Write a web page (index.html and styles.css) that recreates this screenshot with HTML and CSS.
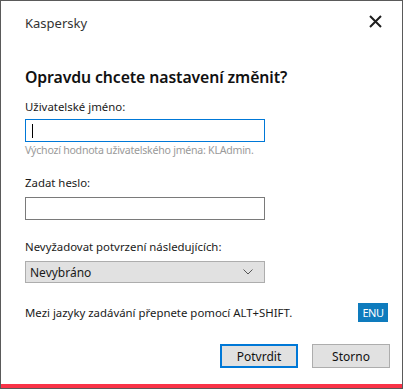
FILE: index.html
```html
<!DOCTYPE html>
<html lang="cs">
<head>
    <meta charset="UTF-8">
    <meta name="viewport" content="width=device-width, initial-scale=1.0">
    <title>Kaspersky</title>
    <link rel="stylesheet" href="styles.css">
</head>
<body>
    <div class="window">
        <div class="titlebar">
            <span class="title">Kaspersky</span>
            <span class="close">
                <svg width="13" height="13" viewBox="0 0 13 13">
                    <path d="M1 1 L12 12 M12 1 L1 12" stroke="#1e1e1e" stroke-width="2"/>
                </svg>
            </span>
        </div>
        <div class="content">
            <h2 class="heading">Opravdu chcete nastavení změnit?</h2>

            <label class="label first">Uživatelské jméno:</label>
            <div class="input focused"><span class="caret"></span></div>
            <div class="hint">Výchozí hodnota uživatelského jména: KLAdmin.</div>

            <label class="label second">Zadat heslo:</label>
            <div class="input"></div>

            <label class="label third">Nevyžadovat potvrzení následujících:</label>
            <div class="select">
                <span>Nevybráno</span>
                <svg width="10" height="6" viewBox="0 0 10 6">
                    <path d="M0.5 0.5 L5 5 L9.5 0.5" fill="none" stroke="#555" stroke-width="1"/>
                </svg>
            </div>

            <div class="lang-row">
                <span>Mezi jazyky zadávání přepnete pomocí ALT+SHIFT.</span>
                <span class="badge">ENU</span>
            </div>

            <div class="buttons">
                <button class="btn primary">Potvrdit</button>
                <button class="btn">Storno</button>
            </div>
        </div>
        <div class="accent"></div>
    </div>
</body>
</html>
```

FILE: styles.css
```css
body {
    margin: 0;
    font-family: "Noto Sans", "Liberation Sans", sans-serif;
    font-size: 11.4px;
    color: #1a1a1a;
    background: #fff;
}
.window {
    box-sizing: border-box;
    width: 403px;
    height: 389px;
    border: 1px solid #5a5a5a;
    display: flex;
    flex-direction: column;
    background: #fff;
}
.titlebar {
    display: flex;
    justify-content: space-between;
    align-items: flex-start;
    padding: 13px 20px 0 24px;
    height: 19px;
}
.title {
    font-size: 13px;
    line-height: 18px;
    color: #333;
}
.close {
    display: flex;
    margin-top: 1px;
}
.content {
    flex: 1;
    padding: 0 0 0 24px;
}
.heading {
    margin: 32px 0 0;
    font-size: 15.8px;
    line-height: 24px;
    font-weight: 600;
    letter-spacing: -0.1px;
    color: #111;
}
.label {
    display: block;
    line-height: 16px;
}
.label.first {
    margin-top: 10px;
}
.label.second {
    margin-top: 17px;
}
.label.third {
    margin-top: 19px;
}
.input {
    box-sizing: border-box;
    width: 240px;
    height: 23px;
    border: 1px solid #7a7a7a;
    margin-top: 6px;
    position: relative;
}
.input.focused {
    border-color: #0078d7;
    margin-top: 4px;
}
.caret {
    position: absolute;
    left: 6px;
    top: 4px;
    width: 1px;
    height: 14px;
    background: #000;
}
.hint {
    line-height: 16px;
    color: #9a9a9a;
    font-size: 10.6px;
    letter-spacing: -0.25px;
}
.select {
    box-sizing: border-box;
    width: 240px;
    height: 22px;
    margin-top: 6px;
    background: #e1e1e1;
    border: 1px solid #adadad;
    display: flex;
    align-items: center;
    justify-content: space-between;
    padding: 0 11px 0 4px;
    font-size: 12px;
}
.lang-row {
    display: flex;
    justify-content: space-between;
    align-items: center;
    margin-top: 20px;
    padding-right: 14px;
    height: 19px;
}
.badge {
    background: #0e7bbd;
    color: #fff;
    font-size: 11px;
    width: 30px;
    height: 19px;
    line-height: 19px;
    text-align: center;
    letter-spacing: -0.5px;
}
.buttons {
    display: flex;
    justify-content: flex-end;
    gap: 14px;
    margin-top: 22px;
    padding-right: 12px;
}
.btn {
    box-sizing: border-box;
    height: 24px;
    width: 78px;
    background: #e1e1e1;
    border: 1px solid #adadad;
    font-family: inherit;
    font-size: 12px;
    color: #111;
    padding: 0;
}
.btn.primary {
    border: 2px solid #0078d7;
}
.accent {
    height: 4px;
    background: #f93347;
}
```
